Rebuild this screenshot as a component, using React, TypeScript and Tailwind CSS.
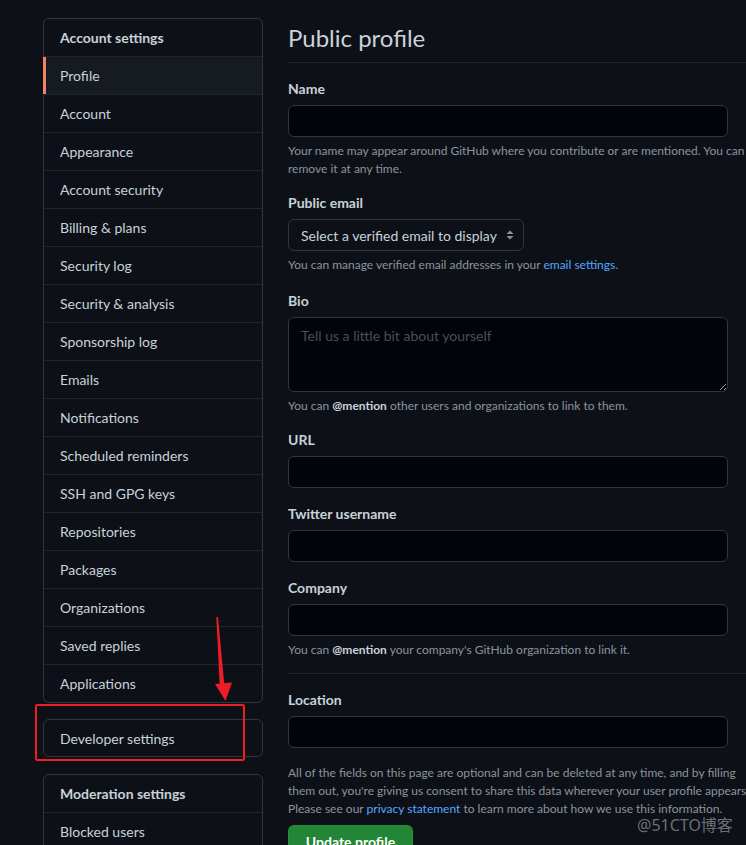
import React from 'react';

const font = { fontFamily: 'Lato, "Noto Sans CJK SC", sans-serif' };

const accountItems = [
  'Profile',
  'Account',
  'Appearance',
  'Account security',
  'Billing & plans',
  'Security log',
  'Security & analysis',
  'Sponsorship log',
  'Emails',
  'Notifications',
  'Scheduled reminders',
  'SSH and GPG keys',
  'Repositories',
  'Packages',
  'Organizations',
  'Saved replies',
  'Applications',
];

const Label: React.FC<{ text: string; className?: string }> = ({ text, className }) => (
  <div className={`text-[14px] leading-[20px] font-bold text-[#c9d1d9] ${className ?? ''}`}>{text}</div>
);

const TextInput: React.FC = () => (
  <div className="mt-[6px] h-[32px] w-[440px] rounded-[6px] border border-[#30363d] bg-[#010409]" />
);

const Note: React.FC<{ children: React.ReactNode; className?: string }> = ({ children, className }) => (
  <p className={`text-[12px] leading-[18px] text-[#8b949e] whitespace-nowrap ${className ?? 'mt-[5px]'}`}>{children}</p>
);

const Sidebar: React.FC = () => (
  <div className="w-[220px] shrink-0 flex flex-col text-[14px] text-[#c9d1d9]">
    <div className="rounded-[6px] border border-[#30363d]">
      <div className="h-[37px] flex items-center px-[16px] font-bold">Account settings</div>
      {accountItems.map((item, i) => (
        <div
          key={item}
          className={`relative h-[38px] border-t border-[#21262d] flex items-center px-[16px] ${i === 0 ? 'bg-[#161b22]' : ''}`}
        >
          {i === 0 && <span className="absolute left-[-1px] top-0 bottom-0 w-[3px] bg-[#f78166]" />}
          {item}
        </div>
      ))}
    </div>
    <div className="mt-[16px] h-[38px] rounded-[6px] border border-[#30363d] flex items-center px-[16px]">
      Developer settings
    </div>
    <div className="mt-[17px] rounded-[6px] border border-[#30363d]">
      <div className="h-[37px] flex items-center px-[16px] font-bold">Moderation settings</div>
      <div className="h-[38px] border-t border-[#21262d] flex items-center px-[16px]">Blocked users</div>
      <div className="h-[38px] border-t border-[#21262d] flex items-center px-[16px]">Interaction limits</div>
    </div>
  </div>
);

const ProfileForm: React.FC = () => (
  <div className="ml-[25px] w-[520px] shrink-0">
    <div className="h-[45px] border-b border-[#21262d]">
      <h1 className="text-[24px] leading-[40px] font-normal text-[#c9d1d9]">Public profile</h1>
    </div>

    <Label text="Name" className="mt-[16px]" />
    <TextInput />
    <Note>
      Your name may appear around GitHub where you contribute or are mentioned. You can
      <br />
      remove it at any time.
    </Note>

    <Label text="Public email" className="mt-[15px]" />
    <div className="mt-[6px] h-[32px] w-[236px] rounded-[6px] border border-[#30363d] bg-[#0d1117] flex items-center justify-between pl-[12px] pr-[9px] text-[14px] text-[#c9d1d9] whitespace-nowrap">
      <span>Select a verified email to display</span>
      <svg width="8" height="12" viewBox="0 0 8 12" className="shrink-0">
        <path d="M4 1.5 L7.5 5 H0.5 Z" fill="#8b949e" />
        <path d="M4 10.5 L7.5 7 H0.5 Z" fill="#8b949e" />
      </svg>
    </div>
    <Note>
      You can manage verified email addresses in your <span className="text-[#58a6ff]">email settings</span>.
    </Note>

    <Label text="Bio" className="mt-[17px]" />
    <textarea
      placeholder="Tell us a little bit about yourself"
      className="mt-[6px] block h-[75px] w-[440px] rounded-[6px] border border-[#30363d] bg-[#010409] px-[12px] py-[8px] text-[14px] leading-[20px] text-[#c9d1d9] placeholder:text-[#484f58] outline-none"
      style={font}
    />
    <Note>
      You can <span className="font-bold text-[#c9d1d9]">@mention</span> other users and organizations to link to them.
    </Note>

    <Label text="URL" className="mt-[15px]" />
    <TextInput />

    <Label text="Twitter username" className="mt-[16px]" />
    <TextInput />

    <Label text="Company" className="mt-[16px]" />
    <TextInput />
    <Note>
      You can <span className="font-bold text-[#c9d1d9]">@mention</span> your company's GitHub organization to link it.
    </Note>

    <div className="mt-[14px] border-t border-[#21262d]" />

    <Label text="Location" className="mt-[16px]" />
    <TextInput />

    <Note className="mt-[16px]">
      All of the fields on this page are optional and can be deleted at any time, and by filling
      <br />
      them out, you're giving us consent to share this data wherever your user profile appears.
      <br />
      Please see our <span className="text-[#58a6ff]">privacy statement</span> to learn more about how we use this information.
    </Note>

    <button className="mt-[7px] h-[32px] w-[125px] rounded-[6px] border border-[#2ea043]/40 bg-[#238636] text-[14px] font-bold text-white">
      Update profile
    </button>
  </div>
);

const App: React.FC = () => {
  return (
    <div className="relative w-[746px] h-[845px] overflow-hidden bg-[#0d1117]" style={font}>
      <div className="flex pl-[43px] pt-[18px]">
        <Sidebar />
        <ProfileForm />
      </div>

      {/* red annotation */}
      <div className="absolute left-[35px] top-[704px] w-[210px] h-[57px] border-2 border-[#ee1c24] rounded-[2px]" />
      <svg className="absolute left-[200px] top-[610px]" width="45" height="95" viewBox="0 0 45 95">
        <path d="M16.3 7 L18 7 L24.5 77 L19.8 77 Z" fill="#ee1c24" />
        <path d="M15 74 L32 72.5 L25.5 91 Z" fill="#ee1c24" />
      </svg>

      <div className="absolute left-[637px] top-[813px] text-[16px] leading-[24px] text-[#6b6f75]" style={{ fontFamily: '"Noto Sans", "Noto Sans CJK SC", sans-serif' }}>
        @51CTO博客
      </div>
    </div>
  );
};

export default App;
